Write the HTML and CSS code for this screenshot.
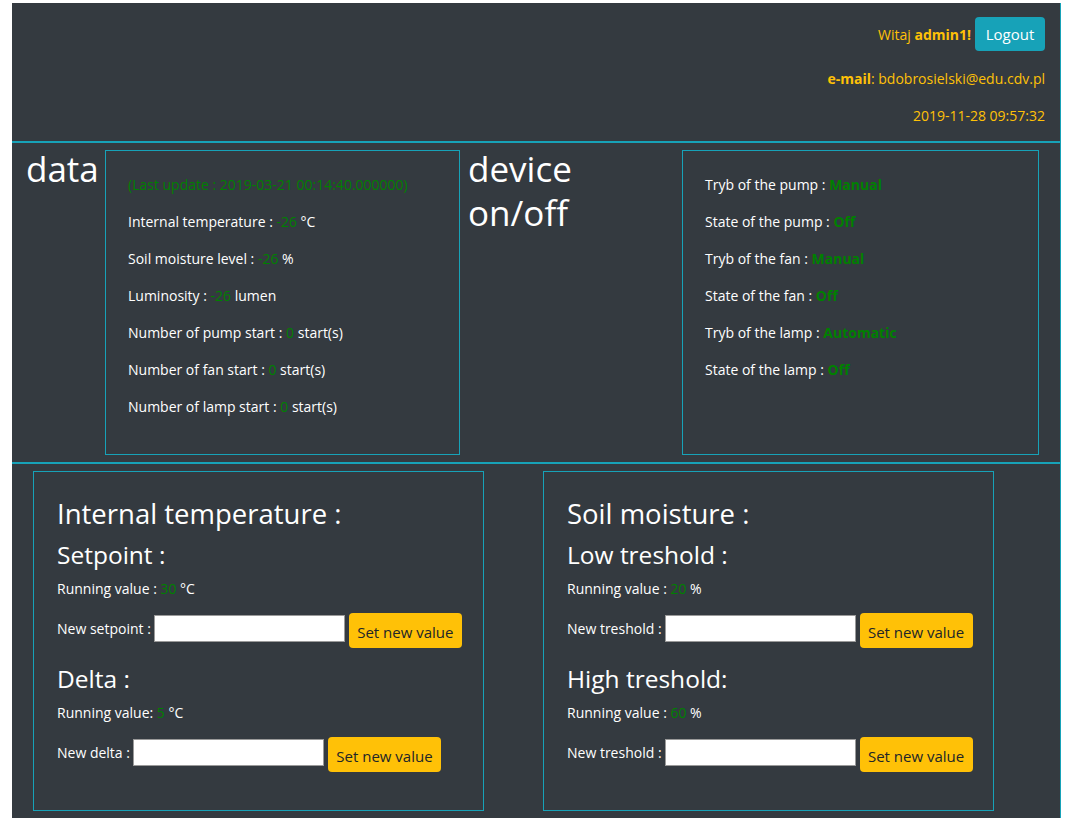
FILE: index.html
```html
<!DOCTYPE html>
<html lang="pl">
<head>
<meta charset="utf-8">
<title>Panel</title>
<link rel="stylesheet" href="styles.css">
</head>
<body>
<div class="panel">
  <header class="top">
    <div class="user-row">
      <span class="greet">Witaj <b>admin1!</b></span>
      <button class="btn btn-logout" type="button">Logout</button>
    </div>
    <p class="meta meta-email"><b>e-mail</b>: bdobrosielski@edu.cdv.pl</p>
    <p class="meta meta-date">2019-11-28 09:57:32</p>
  </header>

  <section class="status">
    <h1 class="sec-title title-data">data</h1>
    <div class="box box-data">
      <p class="val">(Last update : 2019-03-21 00:14:40.000000)</p>
      <p>Internal temperature : <span class="val">-26</span> °C</p>
      <p>Soil moisture level : <span class="val">-26</span> %</p>
      <p>Luminosity : <span class="val">-26</span> lumen</p>
      <p>Number of pump start : <span class="val">0</span> start(s)</p>
      <p>Number of fan start : <span class="val">0</span> start(s)</p>
      <p>Number of lamp start : <span class="val">0</span> start(s)</p>
    </div>
    <h1 class="sec-title title-device">device<br>on/off</h1>
    <div class="box box-device">
      <p>Tryb of the pump : <b class="val">Manual</b></p>
      <p>State of the pump : <b class="val">Off</b></p>
      <p>Tryb of the fan : <b class="val">Manual</b></p>
      <p>State of the fan : <b class="val">Off</b></p>
      <p>Tryb of the lamp : <b class="val">Automatic</b></p>
      <p>State of the lamp : <b class="val">Off</b></p>
    </div>
  </section>

  <section class="controls">
    <div class="card">
      <h2>Internal temperature :</h2>
      <h3>Setpoint :</h3>
      <p>Running value : <span class="val">30</span> °C</p>
      <form class="set-row">
        <label>New setpoint :</label>
        <input type="text" class="field">
        <button class="btn btn-set" type="button">Set new value</button>
      </form>
      <h3>Delta :</h3>
      <p>Running value: <span class="val">5</span> °C</p>
      <form class="set-row">
        <label>New delta :</label>
        <input type="text" class="field">
        <button class="btn btn-set" type="button">Set new value</button>
      </form>
    </div>
    <div class="card">
      <h2>Soil moisture :</h2>
      <h3>Low treshold :</h3>
      <p>Running value : <span class="val">20</span> %</p>
      <form class="set-row">
        <label>New treshold :</label>
        <input type="text" class="field">
        <button class="btn btn-set" type="button">Set new value</button>
      </form>
      <h3>High treshold:</h3>
      <p>Running value : <span class="val">60</span> %</p>
      <form class="set-row">
        <label>New treshold :</label>
        <input type="text" class="field">
        <button class="btn btn-set" type="button">Set new value</button>
      </form>
    </div>
  </section>
</div>
</body>
</html>
```

FILE: styles.css
```css
* { box-sizing: border-box; }

body {
  margin: 0;
  background: #ffffff;
  font-family: "Open Sans", "Noto Sans", sans-serif;
  font-size: 14px;
  color: #ffffff;
}

p { margin: 0 0 15px; line-height: 22px; }
h1, h2, h3 { margin: 0; font-weight: 400; line-height: 1.2; }

.panel {
  margin: 3px 0 0 12px;
  width: 1049px;
  height: 815px;
  background: #343a40;
  border-right: 1px solid #17a2b8;
}

/* header */
.top {
  height: 140px;
  padding: 14px 15px 0 0;
  border-bottom: 2px solid #17a2b8;
  color: #ffc107;
  text-align: right;
}
.user-row {
  display: flex;
  justify-content: flex-end;
  align-items: center;
  gap: 4px;
  height: 34px;
}
.btn {
  font-family: inherit;
  border: none;
  border-radius: 4px;
  cursor: pointer;
}
.btn-logout {
  width: 70px;
  height: 34px;
  background: #17a2b8;
  color: #ffffff;
  font-size: 15px;
}
.meta { margin: 17px 0 0; }
.meta-date { margin-top: 15px; }

/* status */
.status {
  display: flex;
  height: 321px;
  padding: 7px 0 7px;
  border-bottom: 2px solid #17a2b8;
}
.sec-title {
  font-size: 35px;
  line-height: 44px;
  margin-top: -3px;
  color: #ffffff;
}
.title-data { flex: 0 0 93px; padding-left: 14px; }
.title-device { flex: 0 0 222px; padding-left: 8px; }
.box {
  border: 1px solid #17a2b8;
  padding: 23px 22px 20px;
}
.box-data { flex: 0 0 355px; }
.box-device { flex: 0 0 357px; }

.val { color: #008000; }
b.val { font-weight: 700; }

/* controls */
.controls {
  display: flex;
  gap: 59px;
  padding: 7px 0 0 21px;
}
.card {
  width: 451px;
  height: 340px;
  border: 1px solid #17a2b8;
  padding: 24px 23px;
}
.card h2 { font-size: 27.5px; line-height: 35px; margin-bottom: 8px; }
.card h3 { font-size: 24.5px; line-height: 31px; margin-bottom: 8px; }
.set-row {
  display: flex;
  align-items: flex-start;
  height: 35px;
  margin: -2px 0 15px;
}
.set-row label {
  white-space: nowrap;
  flex-shrink: 0;
  margin: 6px 3px 0 0;
}
.field {
  flex-shrink: 0;
  width: 191px;
  height: 27px;
  border: 1px solid #9a9a9a;
  background: #ffffff;
  margin: 2px 4px 0 0;
  padding: 0 4px;
}
.btn-set {
  flex-shrink: 0;
  width: 113px;
  height: 35px;
  background: #ffc107;
  color: #212529;
  font-size: 15px;
  padding-top: 3px;
}
```
